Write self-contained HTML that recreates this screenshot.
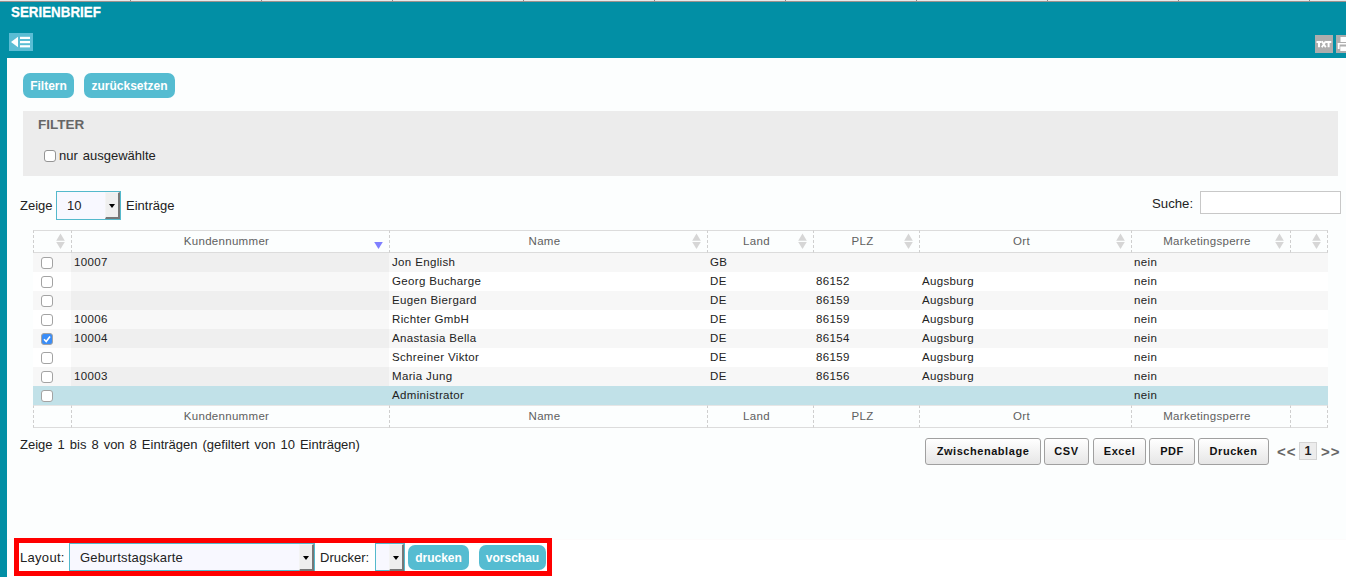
<!DOCTYPE html>
<html><head><meta charset="utf-8">
<style>
*{box-sizing:border-box}
html,body{margin:0;padding:0;width:1346px;height:577px;overflow:hidden;background:#fcfefe;font-family:"Liberation Sans",sans-serif;color:#222}
.abs{position:absolute;white-space:nowrap}
#strip{position:absolute;left:0;top:0;width:1346px;height:2px;background:#e8e8e8;border-bottom:1px solid #9b918e}
#head{position:absolute;left:0;top:2px;width:1346px;height:56px;background:#028fa5}
#lstrip{position:absolute;left:0;top:58px;width:7px;height:519px;background:#028fa5}
.title{left:11px;top:2px;line-height:20px;font-size:15.5px;-webkit-text-stroke:0.3px #fff;transform:scaleX(0.862);transform-origin:0 0;font-weight:bold;color:#fff}
.tbtn{position:absolute;left:9px;top:33px;width:24px;height:18px;background:#5bbdd4}
.btn{position:absolute;height:25px;border-radius:7px;background:#55bcd1;color:#fff;font-weight:bold;font-size:12px;line-height:27px;text-align:center}
#fbox{position:absolute;left:23px;top:111px;width:1315px;height:65px;background:#ececec}
.cb{position:absolute;width:12px;height:12px;border:1px solid #949494;border-radius:3px;background:#fff}
.t13{font-size:13px;line-height:20px}
.sel{position:absolute;height:29px;border:1px solid #54b9cc;background:#f8f8ff}
.sel .arr{position:absolute;right:0;top:0;width:15px;height:27px;background:#efefef;border-top:1px solid #f4f4f4;border-left:1px solid #f4f4f4;border-right:2px solid #777;border-bottom:2px solid #777}
.sel .arr:after{content:"";position:absolute;left:3px;top:11px;border-left:3.5px solid transparent;border-right:3.5px solid transparent;border-top:4px solid #000}
table{position:absolute;left:33px;top:230px;width:1295px;border-collapse:separate;border-spacing:0;table-layout:fixed;font-size:12px}
th{height:23px;padding:0 18px 1px 10px;font-weight:normal;color:#606060;border-top:1px solid #dcdcdc;border-bottom:1px solid #dcdcdc;border-left:1px dashed #cfcfcf;position:relative;background:transparent;line-height:20px;font-size:11.5px;letter-spacing:0.3px}
th.r{border-right:1px dashed #cfcfcf}
tr.f th{border-top:1px solid #e6e6e6;height:23px}
td{height:19px;padding:0 0 0 3px;line-height:19px;white-space:nowrap;font-size:11.5px;letter-spacing:0.35px}
tr.o td{background:#f7f7f7}
tr.o td.s{background:#efefef}
tr.e td{background:#fff}
tr.e td.s{background:#f8f8f8}
tr.hl td{background:#c1e1e8}
.si{position:absolute;right:6px;top:2px}
td .cb{left:8px;top:4px;border-color:#a3a3a3}
td.c{position:relative}
.cbk{background:#3a8df7;border-color:#3a8df7}
.gb{position:absolute;top:438px;height:27px;border:1px solid #a0a0a0;border-radius:3px;background:linear-gradient(#fff,#e6e6e6);font-size:11px;letter-spacing:0.55px;font-weight:bold;color:#111;text-align:center;line-height:25px}
</style></head><body>
<div id="strip"></div><div style="position:absolute;left:130px;top:0;width:1px;height:1px;background:#8a8a8a"></div><div style="position:absolute;left:261px;top:0;width:1px;height:1px;background:#8a8a8a"></div><div style="position:absolute;left:392px;top:0;width:1px;height:1px;background:#8a8a8a"></div><div style="position:absolute;left:523px;top:0;width:1px;height:1px;background:#8a8a8a"></div><div style="position:absolute;left:654px;top:0;width:1px;height:1px;background:#8a8a8a"></div><div style="position:absolute;left:785px;top:0;width:1px;height:1px;background:#8a8a8a"></div><div style="position:absolute;left:916px;top:0;width:1px;height:1px;background:#8a8a8a"></div><div style="position:absolute;left:1047px;top:0;width:1px;height:1px;background:#8a8a8a"></div><div style="position:absolute;left:1178px;top:0;width:1px;height:1px;background:#8a8a8a"></div><div style="position:absolute;left:1309px;top:0;width:1px;height:1px;background:#8a8a8a"></div>
<div id="head"></div>
<div id="lstrip"></div>
<div class="abs title">SERIENBRIEF</div>
<div class="tbtn"><svg width="24" height="18" style="position:absolute;left:0;top:0"><polygon points="2,9 9,3.8 9,14.2" fill="#fff"/><rect x="11" y="3.8" width="10" height="2.2" fill="#fff"/><rect x="11" y="8" width="10" height="2.2" fill="#fff"/><rect x="11" y="12.2" width="10" height="2.2" fill="#fff"/></svg></div>
<div style="position:absolute;left:1315px;top:35px;width:18px;height:18px;background:#adadad"><svg width="18" height="18" style="position:absolute;left:0;top:0"><g stroke="#fff" stroke-width="2" fill="none"><path d="M1.5 7H6.5M4 7V12.3"/><path d="M6.8 6.2L10.8 12.3M10.8 6.2L6.8 12.3" stroke-width="1.8"/><path d="M11 7H16.3M13.6 7V12.3"/></g></svg></div>
<div style="position:absolute;left:1336px;top:35px;width:12px;height:18px;background:#adadad"><svg width="12" height="18" style="position:absolute;left:0;top:0"><rect x="4.5" y="2" width="8" height="5" fill="#fff"/><rect x="1.8" y="8" width="1.8" height="6" fill="#fff"/><rect x="1.8" y="8" width="10" height="1.5" fill="#fff"/><rect x="4.3" y="11.5" width="8" height="4.5" fill="#fff"/></svg></div>

<div class="btn" style="left:23px;top:73px;width:51px">Filtern</div>
<div class="btn" style="left:84px;top:73px;width:91px">zurücksetzen</div>
<div id="fbox"></div>
<div class="abs" style="left:38px;top:115px;line-height:20px;font-size:13.5px;font-weight:bold;color:#666">FILTER</div>
<div class="cb" style="left:44px;top:150px"></div>
<div class="abs t13" style="left:59px;top:146px;word-spacing:1.4px">nur ausgewählte</div>

<div class="abs t13" style="left:20px;top:196px">Zeige</div>
<div class="sel" style="left:56px;top:191px;width:65px"><span class="abs t13" style="left:10px;top:4px">10</span><div class="arr"></div></div>
<div class="abs t13" style="left:126px;top:196px">Einträge</div>
<div class="abs t13" style="left:1152px;top:193.5px;font-size:13.2px">Suche:</div>
<div style="position:absolute;left:1200px;top:191px;width:141px;height:23px;border:1px solid #c8c8c8;background:#fff"></div>

<table>
<colgroup><col style="width:38px"><col style="width:318px"><col style="width:318px"><col style="width:106px"><col style="width:106px"><col style="width:212px"><col style="width:159px"><col style="width:38px"></colgroup>
<tr><th><svg class="si" width="9" height="17" viewBox="0 0 9 17"><polygon points="4.5,0.6 8.8,7.8 0.2,7.8" fill="#d6d6d6"/><polygon points="0.2,9 8.8,9 4.5,16" fill="#d6d6d6"/></svg></th><th>Kundennummer<svg class="si" width="9" height="17" viewBox="0 0 9 17"><polygon points="0.2,9 8.8,9 4.5,16" fill="#7f7fff"/></svg></th><th>Name<svg class="si" width="9" height="17" viewBox="0 0 9 17"><polygon points="4.5,0.6 8.8,7.8 0.2,7.8" fill="#d6d6d6"/><polygon points="0.2,9 8.8,9 4.5,16" fill="#d6d6d6"/></svg></th><th>Land<svg class="si" width="9" height="17" viewBox="0 0 9 17"><polygon points="4.5,0.6 8.8,7.8 0.2,7.8" fill="#d6d6d6"/><polygon points="0.2,9 8.8,9 4.5,16" fill="#d6d6d6"/></svg></th><th>PLZ<svg class="si" width="9" height="17" viewBox="0 0 9 17"><polygon points="4.5,0.6 8.8,7.8 0.2,7.8" fill="#d6d6d6"/><polygon points="0.2,9 8.8,9 4.5,16" fill="#d6d6d6"/></svg></th><th>Ort<svg class="si" width="9" height="17" viewBox="0 0 9 17"><polygon points="4.5,0.6 8.8,7.8 0.2,7.8" fill="#d6d6d6"/><polygon points="0.2,9 8.8,9 4.5,16" fill="#d6d6d6"/></svg></th><th>Marketingsperre<svg class="si" width="9" height="17" viewBox="0 0 9 17"><polygon points="4.5,0.6 8.8,7.8 0.2,7.8" fill="#d6d6d6"/><polygon points="0.2,9 8.8,9 4.5,16" fill="#d6d6d6"/></svg></th><th class="r"><svg class="si" width="9" height="17" viewBox="0 0 9 17"><polygon points="4.5,0.6 8.8,7.8 0.2,7.8" fill="#d6d6d6"/><polygon points="0.2,9 8.8,9 4.5,16" fill="#d6d6d6"/></svg></th></tr>
<tr class="o"><td class="c"><div class="cb"></div></td><td class="s">10007</td><td>Jon English</td><td>GB</td><td></td><td></td><td>nein</td><td></td></tr>
<tr class="e"><td class="c"><div class="cb"></div></td><td class="s"></td><td>Georg Bucharge</td><td>DE</td><td>86152</td><td>Augsburg</td><td>nein</td><td></td></tr>
<tr class="o"><td class="c"><div class="cb"></div></td><td class="s"></td><td>Eugen Biergard</td><td>DE</td><td>86159</td><td>Augsburg</td><td>nein</td><td></td></tr>
<tr class="e"><td class="c"><div class="cb"></div></td><td class="s">10006</td><td>Richter GmbH</td><td>DE</td><td>86159</td><td>Augsburg</td><td>nein</td><td></td></tr>
<tr class="o"><td class="c"><div class="cb cbk"><svg width="10" height="10" style="position:absolute;left:0;top:0"><polyline points="2,5.2 4.2,7.5 8,2.5" fill="none" stroke="#fff" stroke-width="1.6"/></svg></div></td><td class="s">10004</td><td>Anastasia Bella</td><td>DE</td><td>86154</td><td>Augsburg</td><td>nein</td><td></td></tr>
<tr class="e"><td class="c"><div class="cb"></div></td><td class="s"></td><td>Schreiner Viktor</td><td>DE</td><td>86159</td><td>Augsburg</td><td>nein</td><td></td></tr>
<tr class="o"><td class="c"><div class="cb"></div></td><td class="s">10003</td><td>Maria Jung</td><td>DE</td><td>86156</td><td>Augsburg</td><td>nein</td><td></td></tr>
<tr class="hl"><td class="c"><div class="cb"></div></td><td class="s"></td><td>Administrator</td><td></td><td></td><td></td><td>nein</td><td></td></tr>
<tr class="f"><th></th><th>Kundennummer</th><th>Name</th><th>Land</th><th>PLZ</th><th>Ort</th><th>Marketingsperre</th><th class="r"></th></tr>
</table>

<div class="abs t13" style="left:20px;top:435px;word-spacing:1.4px">Zeige 1 bis 8 von 8 Einträgen (gefiltert von 10 Einträgen)</div>

<div style="position:absolute;left:7px;top:539px;width:1339px;height:38px;background:#fff;border-top:1px solid #fdfbfb"></div>
<div class="gb" style="left:925px;width:116px">Zwischenablage</div>
<div class="gb" style="left:1044px;width:45px">CSV</div>
<div class="gb" style="left:1093px;width:53px">Excel</div>
<div class="gb" style="left:1149px;width:46px">PDF</div>
<div class="gb" style="left:1198px;width:71px">Drucken</div>
<div class="abs" style="left:1277px;top:442px;font-size:15px;line-height:20px;font-weight:bold;color:#666;letter-spacing:1px">&lt;&lt;</div>
<div style="position:absolute;left:1299px;top:442px;width:18px;height:18px;border:1px solid #d4d4d4;background:#ececec;font-size:12.5px;font-weight:bold;line-height:17px;text-align:center;color:#222">1</div>
<div class="abs" style="left:1321px;top:442px;font-size:15px;line-height:20px;font-weight:bold;color:#666;letter-spacing:1px">&gt;&gt;</div>
<div style="position:absolute;left:14px;top:538px;width:538px;height:38px;border:5px solid #ff0000;background:#fff"></div>
<div class="abs t13" style="left:20px;top:548px;letter-spacing:0.3px">Layout:</div>
<div class="sel" style="left:69px;top:543px;width:246px;height:28px"><span class="abs t13" style="left:10px;top:4px;letter-spacing:0.2px">Geburtstagskarte</span><div class="arr"></div></div>
<div class="abs t13" style="left:320px;top:548px">Drucker:</div>
<div class="sel" style="left:375px;top:543px;width:30px;height:28px"><div class="arr"></div></div>
<div class="btn" style="left:408px;top:545px;width:61px">drucken</div>
<div class="btn" style="left:479px;top:545px;width:67px">vorschau</div>
</body></html>
